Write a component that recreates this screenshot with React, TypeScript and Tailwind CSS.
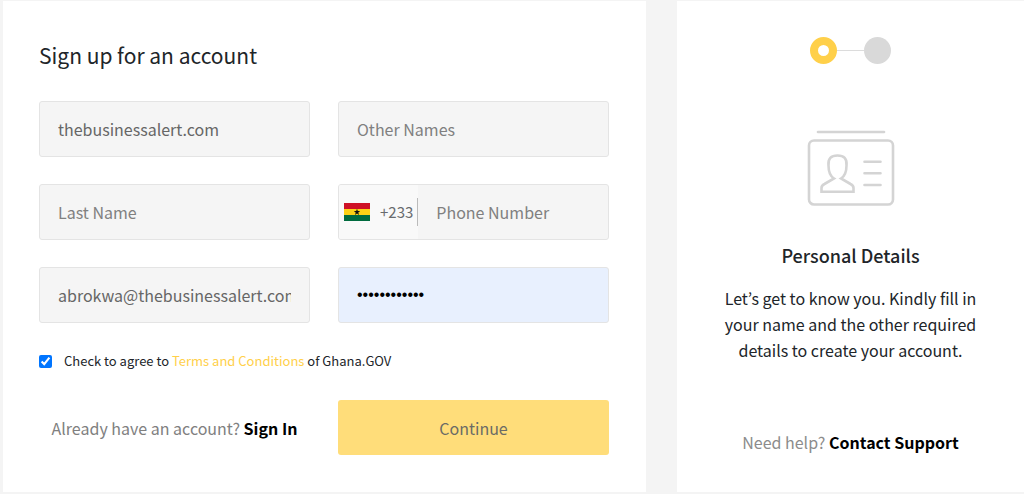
import React, { useState } from "react";

const fieldClass =
  "block h-14 w-full rounded-[3px] border border-[#e4e4e4] bg-[#f5f5f5] px-[18px] text-base text-[#666] placeholder:text-[#808080] placeholder:opacity-100 outline-none focus:border-[#ffd04a]";

interface FieldProps extends React.InputHTMLAttributes<HTMLInputElement> {
  label: string;
}

function Field({ label, ...props }: FieldProps) {
  return <input aria-label={label} className={fieldClass} {...props} />;
}

function GhanaFlag() {
  return (
    <svg width="26" height="18" viewBox="0 0 26 18" aria-hidden="true">
      <rect width="26" height="6" fill="#ce1126" />
      <rect y="6" width="26" height="6" fill="#fcd116" />
      <rect y="12" width="26" height="6" fill="#006b3f" />
      <path
        d="M13 5.8l.8 2.3h2.4l-1.9 1.4.7 2.4-2-1.4-2 1.4.7-2.4-1.9-1.4h2.4z"
        fill="#111"
      />
    </svg>
  );
}

function IdCardIcon() {
  return (
    <svg
      width="88"
      height="76"
      viewBox="0 0 88 76"
      fill="none"
      stroke="#d4d4d4"
      strokeWidth="2.6"
      strokeLinecap="round"
      aria-hidden="true"
    >
      <path d="M11 2h66" />
      <rect x="2" y="10.5" width="84" height="64" rx="5" />
      <path d="M57.500 31.700h16M57.500 43.300h16M57.500 55h16" />
      <path d="M27 48.500C23 46 21.500 41 21.500 35.500C20.800 28.500 24 25.500 30.500 25.500S40.200 28.500 39.500 35.500C39.500 41 38 46 34 48.500L43.500 54Q46.500 55.500 46.500 58V61.800H14.500V58Q14.500 55.500 17.500 54Z" />
    </svg>
  );
}

function PhoneField() {
  return (
    <div className="flex h-14 overflow-hidden rounded-[3px] border border-[#e4e4e4] bg-[#f5f5f5] focus-within:border-[#ffd04a]">
      <button
        type="button"
        aria-label="Country code +233"
        className="flex shrink-0 items-center bg-[#f9f9f9] pl-[5px]"
      >
        <GhanaFlag />
        <span className="flex h-7 items-center border-r border-[#bbb] pr-1 pl-[10px] text-[15px] text-[#686b6e]">
          +233
        </span>
      </button>
      <input
        type="tel"
        aria-label="Phone Number"
        placeholder="Phone Number"
        className="w-full min-w-0 flex-1 px-[18px] text-base text-[#666] placeholder:text-[#808080] placeholder:opacity-100 outline-none"
      />
    </div>
  );
}

function SignUpForm() {
  const [agreed, setAgreed] = useState(true);

  return (
    <form
      className="bg-white pt-[38px] pr-[37px] pb-9 pl-9"
      onSubmit={(e) => e.preventDefault()}
    >
      <h1 className="mb-[30px] text-[21px] leading-8 text-[#212529]">
        Sign up for an account
      </h1>

      <div className="grid grid-cols-2 gap-x-7 gap-y-[27px]">
        <Field label="First Name" defaultValue="thebusinessalert.com" />
        <Field label="Other Names" placeholder="Other Names" />
        <Field label="Last Name" placeholder="Last Name" />
        <PhoneField />
        <Field
          label="Email"
          type="email"
          defaultValue="abrokwa@thebusinessalert.com"
        />
        <input
          type="password"
          aria-label="Password"
          defaultValue="ghanagov1234"
          className="block h-14 w-full rounded-[3px] border border-[#e4e4e4] bg-[#e8f0fe] px-[18px] font-['Liberation_Sans',sans-serif] text-base text-black outline-none"
        />
      </div>

      <div className="mt-[26px] flex h-6 items-center gap-3 text-[13px] text-[#212529]">
        <input
          id="terms"
          type="checkbox"
          checked={agreed}
          onChange={(e) => setAgreed(e.target.checked)}
          className="size-[13px] shrink-0"
        />
        <label htmlFor="terms">
          Check to agree to{" "}
          <a href="#terms" className="text-[#ffd04a]">
            Terms and Conditions
          </a>{" "}
          of Ghana.GOV
        </label>
      </div>

      <div className="mt-[27px] grid grid-cols-2 items-center gap-x-7">
        <p className="text-center text-base text-[#808080]">
          Already have an account?{" "}
          <a href="#signin" className="font-bold text-black">
            Sign In
          </a>
        </p>
        <button
          type="submit"
          className="h-[55px] rounded-[3px] bg-[#ffdd7a] text-base text-[#6b6b66]"
        >
          Continue
        </button>
      </div>
    </form>
  );
}

function StepPanel() {
  return (
    <aside className="flex flex-col items-center bg-white px-10 pt-9 pb-[38px] text-center">
      <div className="flex items-center">
        <span className="size-[27px] rounded-full border-8 border-[#ffd04a]" />
        <span className="h-px w-[27px] bg-[#dcdcdc]" />
        <span className="size-[27px] rounded-full bg-[#d9d9d9]" />
      </div>

      <div className="mt-[66px]">
        <IdCardIcon />
      </div>

      <h2 className="mt-[35px] text-lg leading-7 font-medium text-[#212529]">
        Personal Details
      </h2>
      <p className="mt-4 max-w-[260px] text-base leading-[26px] text-[#212529]">
        Let’s get to know you. Kindly fill in your name and the other required
        details to create your account.
      </p>

      <p className="mt-auto text-base text-[#8c8c8c]">
        Need help?{" "}
        <a href="#support" className="font-bold text-black">
          Contact Support
        </a>
      </p>
    </aside>
  );
}

function App() {
  return (
    <main className="grid min-h-screen grid-cols-[643fr_347fr] gap-x-[31px] bg-[#f4f4f4] pt-px pb-0.5 pl-[3px] font-['Noto_Sans_CJK_KR',sans-serif]">
      <SignUpForm />
      <StepPanel />
    </main>
  );
}

export default App;
